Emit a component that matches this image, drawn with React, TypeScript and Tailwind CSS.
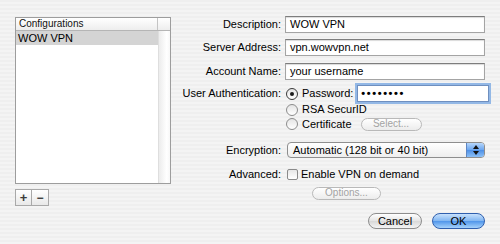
import type { ReactNode } from "react";

const font = "font-['Liberation_Sans',Arial,sans-serif]";

const Row = ({ label, h, className, children }: { label?: string; h: string; className?: string; children?: ReactNode }) => (
  <div className={`flex items-center ${h} ${className ?? ""}`}>
    <div className="w-[107px] shrink-0 text-right pr-[1px]">{label ? `${label}:` : ""}</div>
    <div className="ml-[3px] flex-1 flex items-center">{children}</div>
  </div>
);

const TextInput = ({ value }: { value: string }) => (
  <div className="w-[200px] h-[17px] bg-white border border-[#a4a4a4] border-t-[#7d7d7d] shadow-[inset_0_1px_1px_rgba(0,0,0,0.15)] flex items-center pl-[4px] text-[11px] leading-none">
    {value}
  </div>
);

const Radio = ({ checked, label }: { checked?: boolean; label: string }) => (
  <div className="flex items-center ml-[1px]">
    <div
      className={`w-[12px] h-[12px] rounded-full flex items-center justify-center bg-[linear-gradient(180deg,#e4e4e4,#ffffff)] ${
        checked ? "border-[1.5px] border-[#3a3a3a]" : "border border-[#8c8c8c]"
      }`}
    >
      {checked && <div className="w-[4px] h-[4px] rounded-full bg-[#1a1a1a]" />}
    </div>
    <span className="ml-[4px]">{label}</span>
  </div>
);

const Pill = ({ label, className }: { label: string; className?: string }) => (
  <div
    className={`h-[13px] rounded-full border border-[#b9b9b9] bg-[linear-gradient(180deg,#ffffff,#ececec)] text-[#a3a3a3] text-[10px] flex items-center justify-center leading-none ${className ?? ""}`}
  >
    {label}
  </div>
);

export default function App() {
  return (
    <div
      className={`${font} w-[500px] h-[244px] overflow-hidden text-[11px] text-black bg-[repeating-linear-gradient(180deg,#efefef_0px,#efefef_2px,#f4f4f4_2px,#f4f4f4_4px)] flex`}
    >
      {/* Configurations list */}
      <div className="pl-[15px] pt-[17px] flex flex-col">
        <div className="w-[156px] h-[167px] border border-[#9d9d9d] bg-white flex flex-col">
          <div className="h-[13px] flex border-b border-[#b5b5b5] bg-[linear-gradient(180deg,#ffffff,#ededed)]">
            <div className="w-[142px] border-r border-[#c4c4c4] pl-[3px] text-[10px] leading-[12px] text-[#111]">
              Configurations
            </div>
            <div className="flex-1" />
          </div>
          <div className="flex flex-1">
            <div className="w-[142px]">
              <div className="h-[14px] bg-[#d4d4d4] pl-[2px] leading-[14px] text-[11px]">WOW VPN</div>
            </div>
            <div className="flex-1 border-l border-[#dedede] bg-[linear-gradient(90deg,#ececec,#f7f7f7_40%,#ffffff_70%,#f7f7f7)]" />
          </div>
        </div>
        <div className="mt-[5px] flex w-[34px] h-[17px] border border-[#a9a9a9] bg-[linear-gradient(180deg,#ffffff,#e9e9e9)]">
          <div className="w-[16px] border-r border-[#a9a9a9] flex items-center justify-center text-[13px] font-bold text-[#3c3c3c] leading-none">
            +
          </div>
          <div className="flex-1 flex items-center justify-center text-[12px] font-bold text-[#3c3c3c] leading-none">
            −
          </div>
        </div>
      </div>

      {/* Form */}
      <div className="ml-[4px] w-[310px] pt-[16px] flex flex-col">
        <Row label="Description" h="h-[17px]">
          <TextInput value="WOW VPN" />
        </Row>
        <Row label="Server Address" h="h-[17px]" className="mt-[6px]">
          <TextInput value="vpn.wowvpn.net" />
        </Row>
        <Row label="Account Name" h="h-[17px]" className="mt-[7px]">
          <TextInput value="your username" />
        </Row>
        <Row label="User Authentication" h="h-[17px]" className="mt-[5px]">
          <Radio checked label="Password:" />
          <div className="ml-[4px] w-[132px] h-[17px] bg-white border border-[#6f8fbf] shadow-[0_0_0_2px_#93b8e6] flex items-center pl-[3px] text-[11px] font-bold tracking-[1.6px] leading-none">
            ••••••••
          </div>
        </Row>
        <Row h="h-[15px]">
          <Radio label="RSA SecurID" />
        </Row>
        <Row h="h-[14px]">
          <Radio label="Certificate" />
          <Pill label="Select..." className="ml-[9px] w-[61px]" />
        </Row>
        <Row label="Encryption" h="h-[16px]" className="mt-[11px]">
          <div className="ml-[2px] w-[198px] h-[16px] rounded-[4px] border border-[#8e8e8e] bg-[linear-gradient(180deg,#ffffff,#eeeeee)] flex items-center overflow-hidden">
            <span className="pl-[5px] flex-1 leading-none">Automatic (128 bit or 40 bit)</span>
            <div className="w-[18px] h-full border-l border-[#5d86c4] bg-[linear-gradient(180deg,#b6d6fb,#6aa5ef_50%,#4d8fe6_51%,#8cc0f7)] flex flex-col items-center justify-center gap-[2px]">
              <svg width="6" height="4" viewBox="0 0 6 4">
                <path d="M3 0 L6 4 L0 4 Z" fill="#111" />
              </svg>
              <svg width="6" height="4" viewBox="0 0 6 4">
                <path d="M0 0 L6 0 L3 4 Z" fill="#111" />
              </svg>
            </div>
          </div>
        </Row>
        <Row label="Advanced" h="h-[14px]" className="mt-[9px]">
          <div className="ml-[2px] w-[11px] h-[11px] rounded-[2px] border border-[#8a8a8a] bg-[linear-gradient(180deg,#e6e6e6,#ffffff)]" />
          <span className="ml-[3px]">Enable VPN on demand</span>
        </Row>
        <Row h="h-[14px]" className="mt-[5px]">
          <Pill label="Options..." className="ml-[27px] w-[69px]" />
        </Row>
        <div className="mt-[13px] flex justify-end gap-[10px]">
          <div className="w-[54px] h-[16px] rounded-full border border-[#8d8d8d] bg-[linear-gradient(180deg,#ffffff,#e4e4e4_50%,#d8d8d8_51%,#f4f4f4)] flex items-center justify-center leading-none">
            Cancel
          </div>
          <div className="w-[53px] h-[16px] rounded-full border border-[#2f5fae] bg-[linear-gradient(180deg,#c8e1fc,#7fb5f2_50%,#4f95ea_51%,#a6d2fb)] flex items-center justify-center leading-none">
            OK
          </div>
        </div>
      </div>
    </div>
  );
}
